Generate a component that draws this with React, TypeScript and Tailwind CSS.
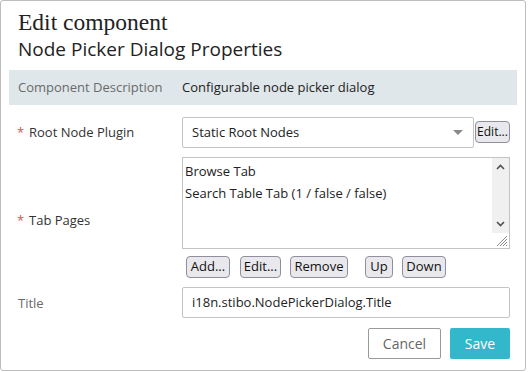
import React from "react";

const sans = { fontFamily: '"Open Sans", "Noto Sans", sans-serif' };

function Btn({ children, className = "" }: { children: React.ReactNode; className?: string }) {
  return (
    <div
      className={`h-[22px] flex items-center justify-center rounded-[4px] border border-[#8f8f9d] bg-[#e9e9ed] text-[13px] text-[#111] ${className}`}
    >
      {children}
    </div>
  );
}

export default function App() {
  return (
    <div className="w-[528px] h-[372px] bg-white" style={sans}>
      <div className="w-[526px] h-[371px] border border-[#bdbdbd] rounded-[3px] flex flex-col">
        <div className="pl-[17px] pt-[8px]">
          <div
            className="text-[23.5px] leading-[26px] text-[#222]"
            style={{ fontFamily: '"Liberation Serif", "DejaVu Serif", serif' }}
          >
            Edit component
          </div>
          <div className="text-[19px] leading-[24px] text-[#222] mt-[2px]">Node Picker Dialog Properties</div>
        </div>
        <div className="mx-[8px] mt-[9px] h-[35px] bg-[#dfe7ea] flex items-center text-[13px]">
          <div className="w-[173px] pl-[9px] text-[#6a6a6a]">Component Description</div>
          <div className="text-[#222]">Configurable node picker dialog</div>
        </div>

        <div className="mt-[12px] flex">
          <div className="w-[181px] flex items-center pl-[16px] text-[13px] text-[#333]">
            <span className="text-[#d9534f] w-[12px]">*</span>
            <span>Root Node Plugin</span>
          </div>
          <div className="w-[292px] h-[31px] border border-[#c4c4c4] rounded-[2px] flex items-center pl-[9px] pr-[10px] text-[13px] text-[#222]">
            <span className="flex-1">Static Root Nodes</span>
            <svg width="10" height="5" viewBox="0 0 10 5">
              <path d="M0 0 L10 0 L5 5 Z" fill="#8a8a8a" />
            </svg>
          </div>
          <Btn className="ml-[1px] mt-[4px] w-[35px] h-[20px] !text-[12px]">Edit...</Btn>
        </div>

        <div className="mt-[9px] flex">
          <div className="w-[181px] flex items-center pl-[16px] text-[13px] text-[#333] pt-[36px]">
            <span className="text-[#d9534f] w-[12px]">*</span>
            <span>Tab Pages</span>
          </div>
          <div className="relative w-[328px] h-[92px] border border-[#c4c4c4] flex">
            <div className="flex-1 pl-[2px] pt-[2px] text-[13px] text-[#222] leading-[22px]">
              <div>Browse Tab</div>
              <div>Search Table Tab (1 / false / false)</div>
            </div>
            <div className="w-[17px] h-[75px] bg-[#f0f0f0] flex flex-col items-center justify-between py-[6px]">
              <svg width="9" height="6" viewBox="0 0 9 6">
                <path d="M1 5 L4.5 1.5 L8 5" stroke="#505050" strokeWidth="1.6" fill="none" />
              </svg>
              <svg width="9" height="6" viewBox="0 0 9 6">
                <path d="M1 1 L4.5 4.5 L8 1" stroke="#505050" strokeWidth="1.6" fill="none" />
              </svg>
            </div>
            <svg className="absolute right-[1px] bottom-[1px]" width="14" height="14" viewBox="0 0 14 14">
              <path d="M13 3 L3 13 M13 6 L6 13 M13 9 L9 13 M13 12 L12 13" stroke="#8a8a8a" strokeWidth="1" />
            </svg>
          </div>
        </div>

        <div className="mt-[7px] flex pl-[185px]">
          <Btn className="w-[44px]">Add...</Btn>
          <Btn className="w-[41px] ml-[10px]">Edit...</Btn>
          <Btn className="w-[58px] ml-[9px]">Remove</Btn>
          <Btn className="w-[28px] ml-[17px]">Up</Btn>
          <Btn className="w-[44px] ml-[9px]">Down</Btn>
        </div>

        <div className="mt-[9px] flex">
          <div className="w-[181px] flex items-center pl-[17px] text-[13px] text-[#6a6a6a] pt-[2px]">Title</div>
          <div className="w-[328px] h-[31px] border border-[#c4c4c4] rounded-[2px] flex items-center pl-[9px] text-[13px] text-[#222]">
            i18n.stibo.NodePickerDialog.Title
          </div>
        </div>

        <div className="mt-[10px] flex justify-end pr-[15px] gap-[9px]">
          <div className="w-[73px] h-[31px] border border-[#9a9a9a] rounded-[2px] flex items-center justify-center text-[14px] text-[#666]">
            Cancel
          </div>
          <div className="w-[60px] h-[31px] rounded-[2px] bg-[#33b8cb] flex items-center justify-center text-[14px] text-white">
            Save
          </div>
        </div>
      </div>
    </div>
  );
}
